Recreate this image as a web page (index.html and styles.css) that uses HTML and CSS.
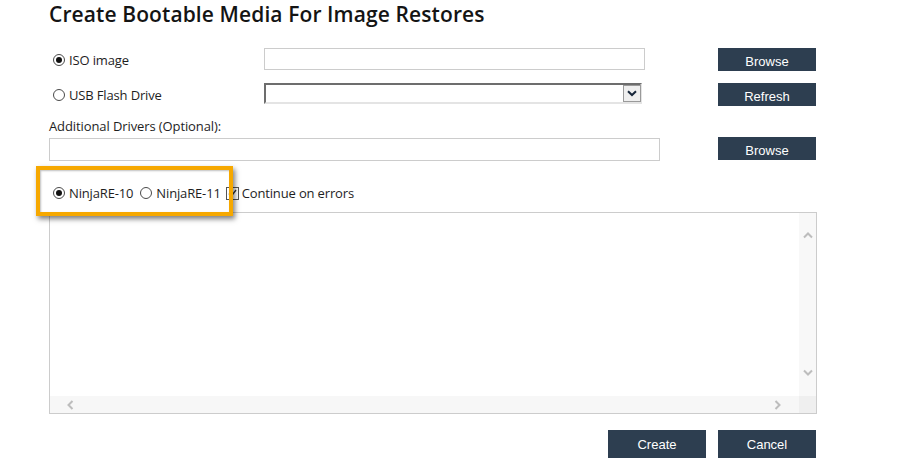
FILE: index.html
```html
<!DOCTYPE html>
<html lang="en">
<head>
<meta charset="utf-8">
<title>Create Bootable Media For Image Restores</title>
<link rel="stylesheet" href="styles.css">
</head>
<body>
<div class="page">
  <h1 class="title">Create Bootable Media For Image Restores</h1>

  <div class="row row-iso">
    <label class="opt col-label"><span class="radio on"></span><span>ISO image</span></label>
    <input class="field field-iso" type="text">
    <button class="btn btn-iso">Browse</button>
  </div>

  <div class="row row-usb">
    <label class="opt col-label"><span class="radio"></span><span>USB Flash Drive</span></label>
    <div class="select">
      <span class="select-btn">
        <svg width="10" height="7" viewBox="0 0 10 7"><path d="M1 1.2 L5 5 L9 1.2" fill="none" stroke="#17263a" stroke-width="2"/></svg>
      </span>
    </div>
    <button class="btn btn-usb">Refresh</button>
  </div>

  <div class="caption">Additional Drivers (Optional):</div>
  <div class="row row-drv">
    <input class="field field-drv" type="text">
    <button class="btn btn-drv">Browse</button>
  </div>

  <div class="options">
    <label class="opt"><span class="radio on"></span><span>NinjaRE-10</span></label>
    <label class="opt opt-second"><span class="radio"></span><span>NinjaRE-11</span></label>
    <label class="opt opt-check"><span class="check">
      <svg width="11" height="11" viewBox="0 0 11 11"><path d="M2 5.5 L4.3 8.2 L9 2" fill="none" stroke="#333" stroke-width="1.4"/></svg>
    </span><span>Continue on errors</span></label>
    <div class="highlight"></div>
  </div>

  <div class="log">
    <div class="log-body"></div>
    <div class="vbar">
      <svg width="10" height="7" viewBox="0 0 10 7"><path d="M1 5.5 L5 1.5 L9 5.5" fill="none" stroke="#bdbdbd" stroke-width="2"/></svg>
      <svg width="10" height="7" viewBox="0 0 10 7"><path d="M1 1.5 L5 5.5 L9 1.5" fill="none" stroke="#bdbdbd" stroke-width="2"/></svg>
    </div>
    <div class="hbar">
      <svg width="7" height="10" viewBox="0 0 7 10"><path d="M5.5 1 L1.5 5 L5.5 9" fill="none" stroke="#bdbdbd" stroke-width="2"/></svg>
      <svg width="7" height="10" viewBox="0 0 7 10"><path d="M1.5 1 L5.5 5 L1.5 9" fill="none" stroke="#bdbdbd" stroke-width="2"/></svg>
    </div>
    <div class="corner"></div>
  </div>

  <div class="actions">
    <button class="btn btn-big">Create</button>
    <button class="btn btn-big">Cancel</button>
  </div>
</div>
</body>
</html>
```

FILE: styles.css
```css
* { box-sizing: border-box; }

html, body {
  margin: 0;
  padding: 0;
  background: #ffffff;
}

body {
  font-family: "Open Sans", "Liberation Sans", sans-serif;
  font-size: 13px;
  color: #222222;
}

.page {
  width: 918px;
  padding-left: 49px;
}

.title {
  margin: 2px 0 0 0;
  height: 24px;
  font-size: 21px;
  line-height: 25px;
  font-weight: 600;
  color: #141414;
  letter-spacing: 0.1px;
}

.row {
  display: flex;
  align-items: flex-start;
}

.row-iso { margin-top: 22px; height: 23px; }
.row-usb { margin-top: 12px; height: 23px; }
.row-drv { margin-top: 2px; height: 24px; }

.opt {
  display: flex;
  align-items: center;
  gap: 4px;
  line-height: 18px;
  color: #1e1e1e;
  white-space: nowrap;
  letter-spacing: -0.15px;
}

.col-label {
  width: 215px;
  height: 23px;
  padding-left: 4px;
}

.radio {
  position: relative;
  display: inline-block;
  width: 12px;
  height: 12px;
  border: 1px solid #4a4a4a;
  border-radius: 50%;
  background: #ffffff;
  flex: none;
}

.radio.on::after {
  content: "";
  position: absolute;
  left: 2px;
  top: 2px;
  width: 6px;
  height: 6px;
  border-radius: 50%;
  background: #111111;
}

.field {
  display: block;
  margin: 0;
  padding: 0;
  border: 1px solid #cccccc;
  background: #ffffff;
  outline: none;
}

.field-iso { width: 381px; height: 22px; }
.field-drv { width: 611px; height: 23px; margin-top: 1px; }

.select {
  position: relative;
  width: 378px;
  height: 21px;
  border-top: 2px solid #6d6d6d;
  border-left: 2px solid #6d6d6d;
  border-bottom: 2px solid #e4e4e4;
  border-right: 2px solid #e4e4e4;
  background: #ffffff;
  display: flex;
  justify-content: flex-end;
  align-items: flex-start;
}

.select-btn {
  width: 18px;
  height: 17px;
  margin-right: -1px;
  background: #efefef;
  border: 1px solid #9a9a9a;
  display: flex;
  align-items: center;
  justify-content: center;
}

.btn {
  display: block;
  margin: 0;
  width: 98px;
  height: 23px;
  padding: 4px 0 0 0;
  border: none;
  border-radius: 0;
  background: #2d3e50;
  color: #ffffff;
  font-family: "Liberation Sans", Arial, sans-serif;
  font-size: 13px;
  line-height: 19px;
  text-align: center;
  cursor: pointer;
}

.btn-iso { margin-left: 73px; }
.btn-usb { margin-left: 76px; }
.btn-drv { margin-left: 58px; }

.caption {
  margin-top: 11px;
  height: 18px;
  line-height: 18px;
  color: #1e1e1e;
  letter-spacing: -0.1px;
}

.options {
  position: relative;
  margin-top: 22px;
  height: 20px;
  padding-left: 4px;
  display: flex;
  align-items: center;
}

.options .opt { height: 20px; }
.opt-second { margin-left: 7px; }
.opt-check { margin-left: 5px; gap: 3px; }

.check {
  display: flex;
  align-items: center;
  justify-content: center;
  width: 13px;
  height: 13px;
  border: 1px solid #555555;
  background: #ffffff;
  flex: none;
}

.highlight {
  position: absolute;
  left: -13px;
  top: -17px;
  width: 197px;
  height: 50px;
  border: 4px solid #f6a800;
  box-shadow: 2px 3px 5px rgba(0, 0, 0, 0.5), inset 1px 1px 2px rgba(0, 0, 0, 0.25);
  pointer-events: none;
}

.log {
  margin-top: 9px;
  width: 768px;
  height: 202px;
  border: 1px solid #cccccc;
  display: grid;
  grid-template-columns: 1fr 17px;
  grid-template-rows: 1fr 17px;
  background: #ffffff;
}

.vbar {
  background: #f8f8f8;
  display: flex;
  flex-direction: column;
  align-items: center;
  justify-content: space-between;
  padding: 19px 0 20px 0;
}

.hbar {
  background: #f7f7f7;
  display: flex;
  align-items: center;
  justify-content: space-between;
  padding: 0 18px 0 17px;
}

.corner { background: #efefef; }

.actions {
  margin-top: 16px;
  width: 767px;
  display: flex;
  justify-content: flex-end;
  gap: 12px;
}

.btn-big {
  height: 28px;
  padding-top: 2px;
  line-height: 26px;
}
```
